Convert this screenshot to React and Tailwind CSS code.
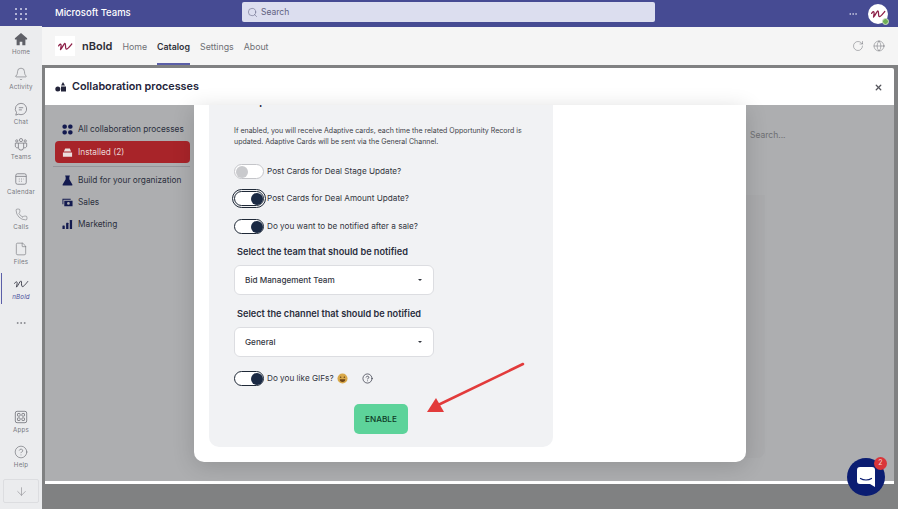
import React from "react";
import { Bell, Search, RotateCw, Globe, X, Phone, File, CircleHelp, ArrowDown, Ellipsis } from "lucide-react";

const Squiggle = ({ className, color = "#8d2048", width = 2 }) => (
  <svg viewBox="0 0 24 14" className={className} fill="none" stroke={color} strokeWidth={width} strokeLinecap="round" strokeLinejoin="round">
    <path d="M1 6c2-3 4-4 4 0l-1 6c3-3 5-9 7-10 2 0 0 7 2 9 2 1 5-3 9-8" />
  </svg>
);

const HomeIcon = () => (
  <svg viewBox="0 0 16 16" className="w-[14px] h-[14px]" fill="#5f6067">
    <path d="M8 1 1 7.2V8.500h2V15h3.500v-4h3v4H13V8.500h2V7.200z" />
  </svg>
);

const ChatIcon = () => (
  <svg viewBox="0 0 16 16" className="w-[14px] h-[14px]" fill="none" stroke="#6b6c72" strokeWidth="0.8">
    <path d="M8 1.500a6.500 6.500 0 1 1-2.800 12.400L2 15l.9-3A6.500 6.500 0 0 1 8 1.500z" />
    <path d="M5.500 6.500h5M5.500 9h3.500" />
  </svg>
);

const TeamsIcon = () => (
  <svg viewBox="0 0 16 16" className="w-[14px] h-[14px]" fill="none" stroke="#6b6c72" strokeWidth="0.8">
    <circle cx="8" cy="3.500" r="1.800" />
    <circle cx="3.200" cy="4.500" r="1.300" />
    <circle cx="12.800" cy="4.500" r="1.300" />
    <path d="M5 7h6v5a3 3 0 0 1-6 0zM5 7H1.500v3.500a2.300 2.300 0 0 0 3.500 1.500M11 7h3.500v3.500a2.300 2.300 0 0 1-3.500 1.500" />
  </svg>
);

const CalendarIcon = () => (
  <svg viewBox="0 0 16 16" className="w-[14px] h-[14px]" fill="none" stroke="#6b6c72" strokeWidth="0.8">
    <rect x="2" y="2" width="12" height="12" rx="2" />
    <path d="M2 5h12M5.500 8h1M8 8h1M10.500 8h.5M5.500 10.500h1M8 10.500h1" />
  </svg>
);

const AppsIcon = () => (
  <svg viewBox="0 0 16 16" className="w-[14px] h-[14px]" fill="none" stroke="#5f6067" strokeWidth="0.8">
    <rect x="1.500" y="1.500" width="13" height="13" rx="2" />
    <rect x="4" y="4" width="3" height="3" rx="0.600" />
    <rect x="9" y="4" width="3" height="3" rx="0.600" />
    <rect x="4" y="9" width="3" height="3" rx="0.600" />
    <rect x="9" y="9" width="3" height="3" rx="0.600" />
  </svg>
);

const railTop = [
  { label: "Home", icon: <HomeIcon /> },
  { label: "Activity", icon: <Bell className="w-[14px] h-[14px] text-[#6b6c72]" strokeWidth={1} /> },
  { label: "Chat", icon: <ChatIcon /> },
  { label: "Teams", icon: <TeamsIcon /> },
  { label: "Calendar", icon: <CalendarIcon /> },
  { label: "Calls", icon: <Phone className="w-[13px] h-[13px] text-[#6b6c72]" strokeWidth={1} /> },
  { label: "Files", icon: <File className="w-[14px] h-[14px] text-[#6b6c72]" strokeWidth={1} /> },
];

const RailItem = ({ label, icon, active }) => (
  <div className="relative h-[35px] flex flex-col items-center justify-center">
    {active && <span className="absolute left-[1px] top-[2px] bottom-[2px] w-[1px] bg-[#5b5fa8]" />}
    <div className="h-[15px] flex items-center justify-center">{icon}</div>
    <span className={`text-[6.200px] leading-[9px] tracking-[0.2px] ${active ? "italic text-[#4b4f9c]" : "text-[#777880]"}`}>{label}</span>
  </div>
);

const Dots = ({ className }) => (
  <svg viewBox="0 0 12 12" className={className} fill="#131a4f">
    <rect x="0.500" y="0.500" width="4.800" height="4.800" rx="2" />
    <rect x="6.700" y="0.500" width="4.800" height="4.800" rx="2" />
    <rect x="0.500" y="6.700" width="4.800" height="4.800" rx="2" />
    <rect x="6.700" y="6.700" width="4.800" height="4.800" rx="2" />
  </svg>
);

const Stack = ({ className }) => (
  <svg viewBox="0 0 12 12" className={className} fill="#eadedd">
    <path d="M3.500 1.500h5L10 5H2zM1 6h10v4.500H1z" />
  </svg>
);

const Flask = ({ className }) => (
  <svg viewBox="0 0 12 12" className={className} fill="#131a4f">
    <path d="M3.500 0.500h5v1H8V4.500l3.300 5.800c.3.600 0 1.200-.7 1.200H1.400c-.7 0-1-.6-.7-1.200L4 4.500v-3h-.5z" />
  </svg>
);

const Money = ({ className }) => (
  <svg viewBox="0 0 12 12" className={className} fill="#131a4f">
    <path d="M0.500 2h9v1H1.500v5h-1z" />
    <path fillRule="evenodd" d="M2.500 4h9v6h-9zM7 5.500a1.500 1.500 0 1 0 0 3 1.500 1.500 0 0 0 0-3z" />
  </svg>
);

const Bars = ({ className }) => (
  <svg viewBox="0 0 12 12" className={className} fill="#131a4f">
    <rect x="0.500" y="7" width="2.500" height="4" rx="0.500" />
    <rect x="4.500" y="4" width="2.500" height="7" rx="0.500" />
    <rect x="8.500" y="1" width="2.500" height="10" rx="0.500" />
  </svg>
);

const ProcessIcon = () => (
  <svg viewBox="0 0 12 12" className="w-[12px] h-[12px]" fill="#23243a">
    <circle cx="2.800" cy="8" r="2.500" />
    <path d="M8 1l2 3.500H6z" />
    <rect x="6" y="5.500" width="5" height="5" />
  </svg>
);

const NavRow = ({ icon, label }) => (
  <div className="h-[22px] flex items-center gap-[5px] pl-[7px] text-[8.300px] text-[#2b2e3d]">
    {icon}
    <span>{label}</span>
  </div>
);

const Toggle = ({ on, focus }) => (
  <div className={`relative w-[30px] h-[15px] shrink-0 rounded-full bg-white border ${on ? "border-[#1f2937]" : "border-[#c4c5c9]"} ${focus ? "outline outline-1 outline-offset-1 outline-[#1f2937]" : ""}`}>
    <span className={`absolute top-[0.500px] w-[12px] h-[12px] rounded-full ${on ? "right-[0.500px] bg-[#1b2a44]" : "left-[1px] bg-[#c9cacd]"}`} />
  </div>
);

const ToggleRow = ({ on, focus, className, children }) => (
  <div className={`flex items-center gap-[3px] text-[8.200px] text-[#33363f] ${className}`}>
    <Toggle on={on} focus={focus} />
    {children}
  </div>
);

const SelectBox = ({ value }) => (
  <div className="mt-[7px] w-[200px] h-[30px] flex items-center justify-between pl-[10px] pr-[11px] bg-white rounded-md border border-[#dcdde1] text-[8.200px] font-medium text-[#33363f]">
    <span>{value}</span>
    <span className="w-0 h-0 border-x-[2.500px] border-x-transparent border-t-[2.500px] border-t-[#33363f]" />
  </div>
);

const SmileFace = () => (
  <svg viewBox="0 0 12 12" className="w-[11px] h-[11px]">
    <circle cx="6" cy="6" r="5.500" fill="#d9a94a" />
    <circle cx="4" cy="4.500" r="0.800" fill="#5b3a12" />
    <circle cx="8" cy="4.500" r="0.800" fill="#5b3a12" />
    <path d="M3 6.800h6a3 3 0 0 1-6 0z" fill="#6e4518" />
  </svg>
);

const App = () => {
  return (
    <div className="relative w-[898px] h-[510px] overflow-hidden flex flex-col bg-white pb-px font-['Inter',sans-serif]">
      {/* top bar */}
      <div className="h-[27px] shrink-0 bg-[#464b93] flex items-center text-white">
        <div className="w-[42px] grid grid-cols-3 gap-[3px] px-[15px]">
          {Array.from({ length: 9 }).map((_, i) => (
            <span key={i} className="w-[2px] h-[2px] bg-[#d8d9ee] rounded-full" />
          ))}
        </div>
        <span className="ml-[13px] w-[187px] text-[9.500px] font-medium">Microsoft Teams</span>
        <div className="self-start mt-[2px] w-[413px] h-[20px] bg-[#dcdeef] rounded-[2px] flex items-center gap-[3px] pl-[5px] text-[8.500px] text-[#5f6180]">
          <Search className="w-[11px] h-[11px]" strokeWidth={1.2} />
          <span>Search</span>
        </div>
        <Ellipsis className="ml-[193px] w-[10px] h-[10px] text-[#e8e8f5]" strokeWidth={1.5} />
        <div className="relative ml-[10px] w-[20px] h-[20px] rounded-full bg-white flex items-center justify-center">
          <Squiggle className="w-[15px] h-[10px]" />
          <span className="absolute right-[-1px] bottom-[-1px] w-[7px] h-[7px] rounded-full bg-[#6fae55] border border-[#cfe3c5]" />
        </div>
      </div>

      <div className="flex flex-1 min-h-0">
        {/* left rail */}
        <div className="w-[42px] shrink-0 bg-[#ebecee] flex flex-col -mt-px">
          {railTop.map((item) => (
            <RailItem key={item.label} label={item.label} icon={item.icon} />
          ))}
          <RailItem label="nBold" active icon={<Squiggle className="w-[15px] h-[10px]" color="#3a3b48" width={1.5} />} />
          <div className="mt-[5px] h-[24px] flex items-center justify-center text-[#76777d]">
            <Ellipsis className="w-[12px] h-[12px]" strokeWidth={1.5} />
          </div>
          <div className="mt-auto">
            <RailItem label="Apps" icon={<AppsIcon />} />
            <RailItem label="Help" icon={<CircleHelp className="w-[14px] h-[14px] text-[#5f6067]" strokeWidth={1} />} />
          </div>
          <div className="mx-[3px] mt-[5px] mb-[6px] h-[24px] rounded-[2px] border border-[#dcdde0] flex items-center justify-center">
            <ArrowDown className="w-[13px] h-[13px] text-[#7c7d83]" strokeWidth={1} />
          </div>
        </div>

        <div className="flex-1 min-w-0 flex flex-col">
          {/* app header */}
          <div className="h-[38px] shrink-0 bg-[#f5f5f5] flex items-center pl-[13px] pr-[13px]">
            <div className="w-[20px] h-[20px] bg-white flex items-center justify-center">
              <Squiggle className="w-[15px] h-[9px]" />
            </div>
            <span className="ml-[7px] text-[11px] font-semibold text-[#2e2e38]">nBold</span>
            <div className="ml-[10px] pt-[2px] flex gap-[10px] text-[8.800px] text-[#6f7076] h-full items-center">
              <span>Home</span>
              <span className="relative h-full flex items-center font-semibold text-[#30313a]">
                Catalog
                <span className="absolute left-0 right-0 bottom-0 h-[2px] bg-[#5b5fa8]" />
              </span>
              <span>Settings</span>
              <span>About</span>
            </div>
            <div className="ml-auto flex items-center gap-[9px] text-[#5f6067]">
              <RotateCw className="w-[12px] h-[12px]" strokeWidth={0.9} />
              <Globe className="w-[12px] h-[12px]" strokeWidth={0.9} />
            </div>
          </div>

          <div className="flex-1 min-h-0 bg-[#808182] pt-[3px] pl-[3px] pr-[4px] pb-[25px]">
            <div className="h-full flex flex-col border-b-[3px] border-white">
              {/* dialog title */}
              <div className="h-[37px] shrink-0 bg-white flex items-center pl-[10px] pr-[11px] pt-px rounded-tr-[2px]">
                <ProcessIcon />
                <span className="ml-[5px] text-[10.800px] font-semibold text-[#23243a]">Collaboration processes</span>
                <X className="ml-auto w-[9px] h-[9px] text-[#55565c]" strokeWidth={3.5} />
              </div>

              <div className="relative flex-1 min-h-0 flex bg-[#adaeb0]">
                {/* faded catalog card behind the dialog */}
                <div className="absolute left-[160px] top-[90px] w-[560px] h-[263px] bg-[#aaabad] rounded-br-lg" />

                {/* catalog nav */}
                <div className="relative w-[149px] shrink-0 pt-[13px] pl-[10px] pr-[4px]">
                  <NavRow icon={<Dots className="w-[11px] h-[11px]" />} label="All collaboration processes" />
                  <div className="mt-px h-[22px] bg-[#a82429] rounded-[4px] flex items-center gap-[5px] pl-[7px] text-[8.300px] text-[#e9d6d6]">
                    <Stack className="w-[11px] h-[11px]" />
                    <span className="pt-px">Installed (2)</span>
                  </div>
                  <div className="h-px bg-[#94959a] -ml-[2px] mt-[3px] mb-[2px]" />
                  <NavRow icon={<Flask className="w-[11px] h-[11px]" />} label="Build for your organization" />
                  <NavRow icon={<Money className="w-[11px] h-[11px]" />} label="Sales" />
                  <NavRow icon={<Bars className="w-[11px] h-[11px]" />} label="Marketing" />
                </div>

                {/* wizard dialog */}
                <div className="relative w-[552px] h-[357px] shrink-0 bg-white rounded-b-[10px] pl-[15px] shadow-[0_4px_22px_rgba(0,0,0,0.16)]">
                  <div className="w-[344px] h-[342px] bg-[#f1f2f4] rounded-b-[10px] overflow-hidden pl-[25px]">
                    <div className="-mt-[9px] ml-[2px] h-[12px] text-[10.500px] leading-[12px] font-semibold text-[#23243a]">Setup</div>
                    <p className="mt-[17px] text-[7px] leading-[11px] text-[#3c3e47]">
                      If enabled, you will receive Adaptive cards, each time the related Opportunity Record is
                      <br />
                      updated. Adaptive Cards will be sent via the General Channel.
                    </p>
                    <ToggleRow className="mt-[17px]">Post Cards for Deal Stage Update?</ToggleRow>
                    <ToggleRow on focus className="mt-[12px]">Post Cards for Deal Amount Update?</ToggleRow>
                    <ToggleRow on className="mt-[13px]">Do you want to be notified after a sale?</ToggleRow>
                    <div className="mt-[12px] ml-[3px] text-[9.200px] leading-[12px] font-semibold text-[#2b2e3d]">Select the team that should be notified</div>
                    <SelectBox value="Bid Management Team" />
                    <div className="mt-[13px] ml-[3px] text-[9.200px] leading-[12px] font-semibold text-[#2b2e3d]">Select the channel that should be notified</div>
                    <SelectBox value="General" />
                    <ToggleRow on className="mt-[14px]">
                      <span>Do you like GIFs?</span>
                      <SmileFace />
                      <CircleHelp className="ml-[11px] w-[11px] h-[11px] text-[#2b2e3d]" strokeWidth={1.5} />
                    </ToggleRow>
                    <div className="mt-[18px] ml-[120px] w-[54px] h-[30px] bg-[#5dd39a] rounded-[5px] flex items-center justify-center text-[8.200px] font-medium text-[#0d3b26]">
                      ENABLE
                    </div>
                  </div>
                </div>

                <div className="relative flex-1 pl-[4px] pt-[24px] text-[8.500px] text-[#6c6d70]">Search...</div>
              </div>
            </div>
          </div>
        </div>
      </div>

      {/* callout arrow drawn on the screenshot */}
      <svg className="absolute left-0 top-0 w-[898px] h-[510px] pointer-events-none" viewBox="0 0 898 510">
        <path d="M523 364 436 406" stroke="#e23b3b" strokeWidth="2.500" strokeLinecap="round" />
        <path d="M427 412 436 398 444 412z" fill="#e23b3b" />
      </svg>

      {/* chat launcher */}
      <div className="absolute left-[847px] top-[458px] w-[38px] h-[38px] rounded-full bg-[#0b1d72] flex items-center justify-center">
        <svg viewBox="0 0 18 20" className="w-[18px] h-[20px]">
          <path d="M3 0h12a3 3 0 0 1 3 3v17l-5-3H3a3 3 0 0 1-3-3V3a3 3 0 0 1 3-3z" fill="#fff" />
          <path d="M3.500 11.500c3 2 8 2 11 0" stroke="#0b1d72" strokeWidth="1.200" fill="none" strokeLinecap="round" />
        </svg>
        <span className="absolute left-[27px] top-[-1px] w-[13px] h-[13px] rounded-full bg-[#d9363a] flex items-center justify-center text-[7px] text-[#f6d5d5]">2</span>
      </div>
    </div>
  );
};

export default App;
